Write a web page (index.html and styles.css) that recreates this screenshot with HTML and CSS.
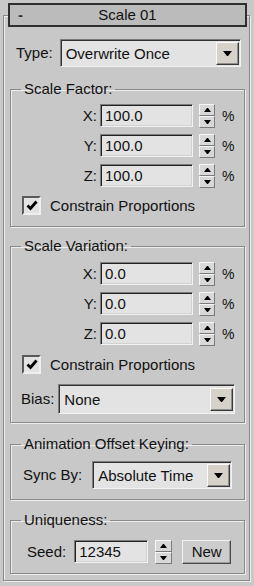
FILE: index.html
```html
<!DOCTYPE html>
<html lang="en">
<head>
    <meta charset="UTF-8">
    <title>Scale 01</title>
    <link rel="stylesheet" href="styles.css">
</head>
<body>
    <div class="rollout">
        <!-- Cabeçalho do rollout -->
        <div class="rollout-head">
            <span class="minus">-</span>
            <span class="title">Scale 01</span>
        </div>

        <div class="type-row">
            <span class="label">Type:</span>
            <div class="combo combo-type">
                <span>Overwrite Once</span>
                <span class="drop"></span>
            </div>
        </div>

        <!-- Scale Factor -->
        <fieldset class="group group-factor">
            <legend>Scale Factor:</legend>
            <div class="spin-row">
                <span class="axis">X:</span>
                <div class="field">100.0</div>
                <div class="spin"><span class="up"></span><span class="down"></span></div>
                <span class="pct">%</span>
            </div>
            <div class="spin-row">
                <span class="axis">Y:</span>
                <div class="field">100.0</div>
                <div class="spin"><span class="up"></span><span class="down"></span></div>
                <span class="pct">%</span>
            </div>
            <div class="spin-row">
                <span class="axis">Z:</span>
                <div class="field">100.0</div>
                <div class="spin"><span class="up"></span><span class="down"></span></div>
                <span class="pct">%</span>
            </div>
            <div class="check-row">
                <span class="check"><svg width="12" height="11" viewBox="0 0 12 11"><polyline points="1.5,5.5 4.5,8.5 10.5,1.5" fill="none" stroke="#000" stroke-width="2.8"/></svg></span>
                <span>Constrain Proportions</span>
            </div>
        </fieldset>

        <!-- Scale Variation -->
        <fieldset class="group group-variation">
            <legend>Scale Variation:</legend>
            <div class="spin-row">
                <span class="axis">X:</span>
                <div class="field">0.0</div>
                <div class="spin"><span class="up"></span><span class="down"></span></div>
                <span class="pct">%</span>
            </div>
            <div class="spin-row">
                <span class="axis">Y:</span>
                <div class="field">0.0</div>
                <div class="spin"><span class="up"></span><span class="down"></span></div>
                <span class="pct">%</span>
            </div>
            <div class="spin-row">
                <span class="axis">Z:</span>
                <div class="field">0.0</div>
                <div class="spin"><span class="up"></span><span class="down"></span></div>
                <span class="pct">%</span>
            </div>
            <div class="check-row">
                <span class="check"><svg width="12" height="11" viewBox="0 0 12 11"><polyline points="1.5,5.5 4.5,8.5 10.5,1.5" fill="none" stroke="#000" stroke-width="2.8"/></svg></span>
                <span>Constrain Proportions</span>
            </div>
            <div class="bias-row">
                <span class="label">Bias:</span>
                <div class="combo combo-bias">
                    <span>None</span>
                    <span class="drop"></span>
                </div>
            </div>
        </fieldset>

        <!-- Animation Offset Keying -->
        <fieldset class="group group-anim">
            <legend>Animation Offset Keying:</legend>
            <div class="sync-row">
                <span class="label">Sync By:</span>
                <div class="combo combo-sync">
                    <span>Absolute Time</span>
                    <span class="drop"></span>
                </div>
            </div>
        </fieldset>

        <!-- Uniqueness -->
        <fieldset class="group group-unique">
            <legend>Uniqueness:</legend>
            <div class="seed-row">
                <span class="label">Seed:</span>
                <div class="field field-seed">12345</div>
                <div class="spin spin-seed"><span class="up"></span><span class="down"></span></div>
                <button class="btn-new">New</button>
            </div>
        </fieldset>
    </div>
</body>
</html>
```

FILE: styles.css
```css
/* Página */
body {
    margin: 0;
    width: 254px;
    height: 586px;
    overflow: hidden;
    background-color: #c8c8c8;
    font-family: "Liberation Sans", Arial, sans-serif;
    font-size: 15px;
    color: #111;
}

/* Moldura do rollout */
.rollout {
    margin: 15px 4px 0 3px;
    padding: 0 4px 6px 6px;
    border: 1px solid #8a8a8a;
    box-shadow: inset 1px 1px 0 #ededed, 1px 1px 0 #ededed;
}

.rollout-head {
    margin: -13px -2px 0 -2px;
    height: 24px;
    box-sizing: border-box;
    border: 2px solid #2f2f2f;
    background-color: #bbbbbb;
    display: grid;
    grid-template-columns: 1fr auto 1fr;
    align-items: center;
    line-height: 18px;
}

.minus {
    padding-left: 8px;
    font-weight: bold;
    color: #333;
}

/* Linha Type */
.type-row {
    margin-top: 12px;
    padding-left: 6px;
    display: flex;
    align-items: center;
}

.label {
    line-height: 18px;
}

/* Caixa combinada (dropdown) */
.combo {
    box-sizing: border-box;
    height: 28px;
    padding: 0 1px 0 5px;
    background-color: #e3e3e3;
    border: 1px solid;
    border-color: #7c7c7c #f2f2f2 #f2f2f2 #7c7c7c;
    box-shadow: inset 1px 1px 0 #333;
    display: flex;
    align-items: center;
    justify-content: space-between;
}

.combo-type {
    margin-left: 7px;
    width: 181px;
}

.combo-bias {
    margin-left: 4px;
    width: 177px;
    height: 30px;
}

.combo-sync {
    margin-left: 10px;
    width: 140px;
}

.drop {
    box-sizing: border-box;
    width: 23px;
    height: 23px;
    margin-top: 1px;
    background-color: #d6d2ca;
    border: 1px solid;
    border-color: #fafafa #3a3a3a #3a3a3a #fafafa;
    box-shadow: inset -1px -1px 0 #8e8e8e;
    display: flex;
    align-items: center;
    justify-content: center;
}

.drop::after {
    content: "";
    width: 1px;
    border-left: 4px solid transparent;
    border-right: 4px solid transparent;
    border-top: 5px solid #000;
}

/* Grupos */
.group {
    margin: 14px 0 0 0;
    padding: 7px 0 11px 10px;
    min-width: 0;
    border: 1px solid #8a8a8a;
    box-shadow: inset 1px 1px 0 #ededed, 1px 1px 0 #ededed;
}

.group legend {
    padding: 0 3px;
    margin: 0;
    line-height: 16px;
}

.group-variation {
    margin-top: 11px;
    padding-top: 8px;
    padding-bottom: 8px;
}

.group-variation .check-row {
    margin-top: 10px;
}

.group-anim {
    margin-top: 13px;
    padding-top: 9px;
    padding-bottom: 10px;
}

.group-unique {
    margin-top: 12px;
    padding-top: 11px;
    padding-bottom: 9px;
}

/* Linhas com spinner */
.spin-row {
    height: 23px;
    display: flex;
    align-items: center;
}

.spin-row + .spin-row {
    margin-top: 7px;
}

.axis {
    width: 76px;
    margin-right: 3px;
    text-align: right;
}

.field {
    box-sizing: border-box;
    width: 93px;
    height: 23px;
    padding: 1px 0 0 4px;
    background-color: #e3e3e3;
    border: 1px solid;
    border-color: #7c7c7c #f2f2f2 #f2f2f2 #7c7c7c;
    box-shadow: inset 1px 1px 0 #222, inset -1px -1px 0 #d2d2d2;
    line-height: 19px;
}

.spin {
    margin-left: 6px;
    width: 16px;
    height: 24px;
    display: flex;
    flex-direction: column;
}

.spin span {
    flex: 1;
    box-sizing: border-box;
    background-color: #d8d8d8;
    border: 1px solid;
    border-color: #f6f6f6 #7a7a7a #7a7a7a #f6f6f6;
    display: flex;
    align-items: center;
    justify-content: center;
}

.spin .up::after {
    content: "";
    width: 1px;
    border-left: 3px solid transparent;
    border-right: 3px solid transparent;
    border-bottom: 4px solid #000;
}

.spin .down::after {
    content: "";
    width: 1px;
    border-left: 3px solid transparent;
    border-right: 3px solid transparent;
    border-top: 4px solid #000;
}

.pct {
    margin-left: 7px;
    font-size: 14px;
}

/* Caixa de seleção */
.check-row {
    margin-top: 9px;
    padding-left: 1px;
    display: flex;
    align-items: center;
}

.check {
    box-sizing: border-box;
    width: 19px;
    height: 19px;
    margin-right: 9px;
    background-color: #e3e3e3;
    border: 2px solid;
    border-color: #5a5a5a #efefef #efefef #5a5a5a;
    display: flex;
    align-items: center;
    justify-content: center;
}

.bias-row {
    margin-top: 10px;
    display: flex;
    align-items: center;
}

.sync-row {
    padding-left: 2px;
    display: flex;
    align-items: center;
}

/* Linha Seed */
.seed-row {
    height: 25px;
    padding-left: 6px;
    display: flex;
    align-items: center;
}

.field-seed {
    margin-left: 8px;
    width: 74px;
}

.spin-seed {
    margin-left: 7px;
    width: 17px;
}

.btn-new {
    margin-left: 10px;
    width: 49px;
    height: 24px;
    padding: 0;
    font-family: inherit;
    font-size: 15px;
    color: #111;
    background-color: #cccccc;
    border: 1px solid;
    border-color: #f2f2f2 #4a4a4a #4a4a4a #f2f2f2;
    box-shadow: inset -1px -1px 0 #9a9a9a;
}
```
